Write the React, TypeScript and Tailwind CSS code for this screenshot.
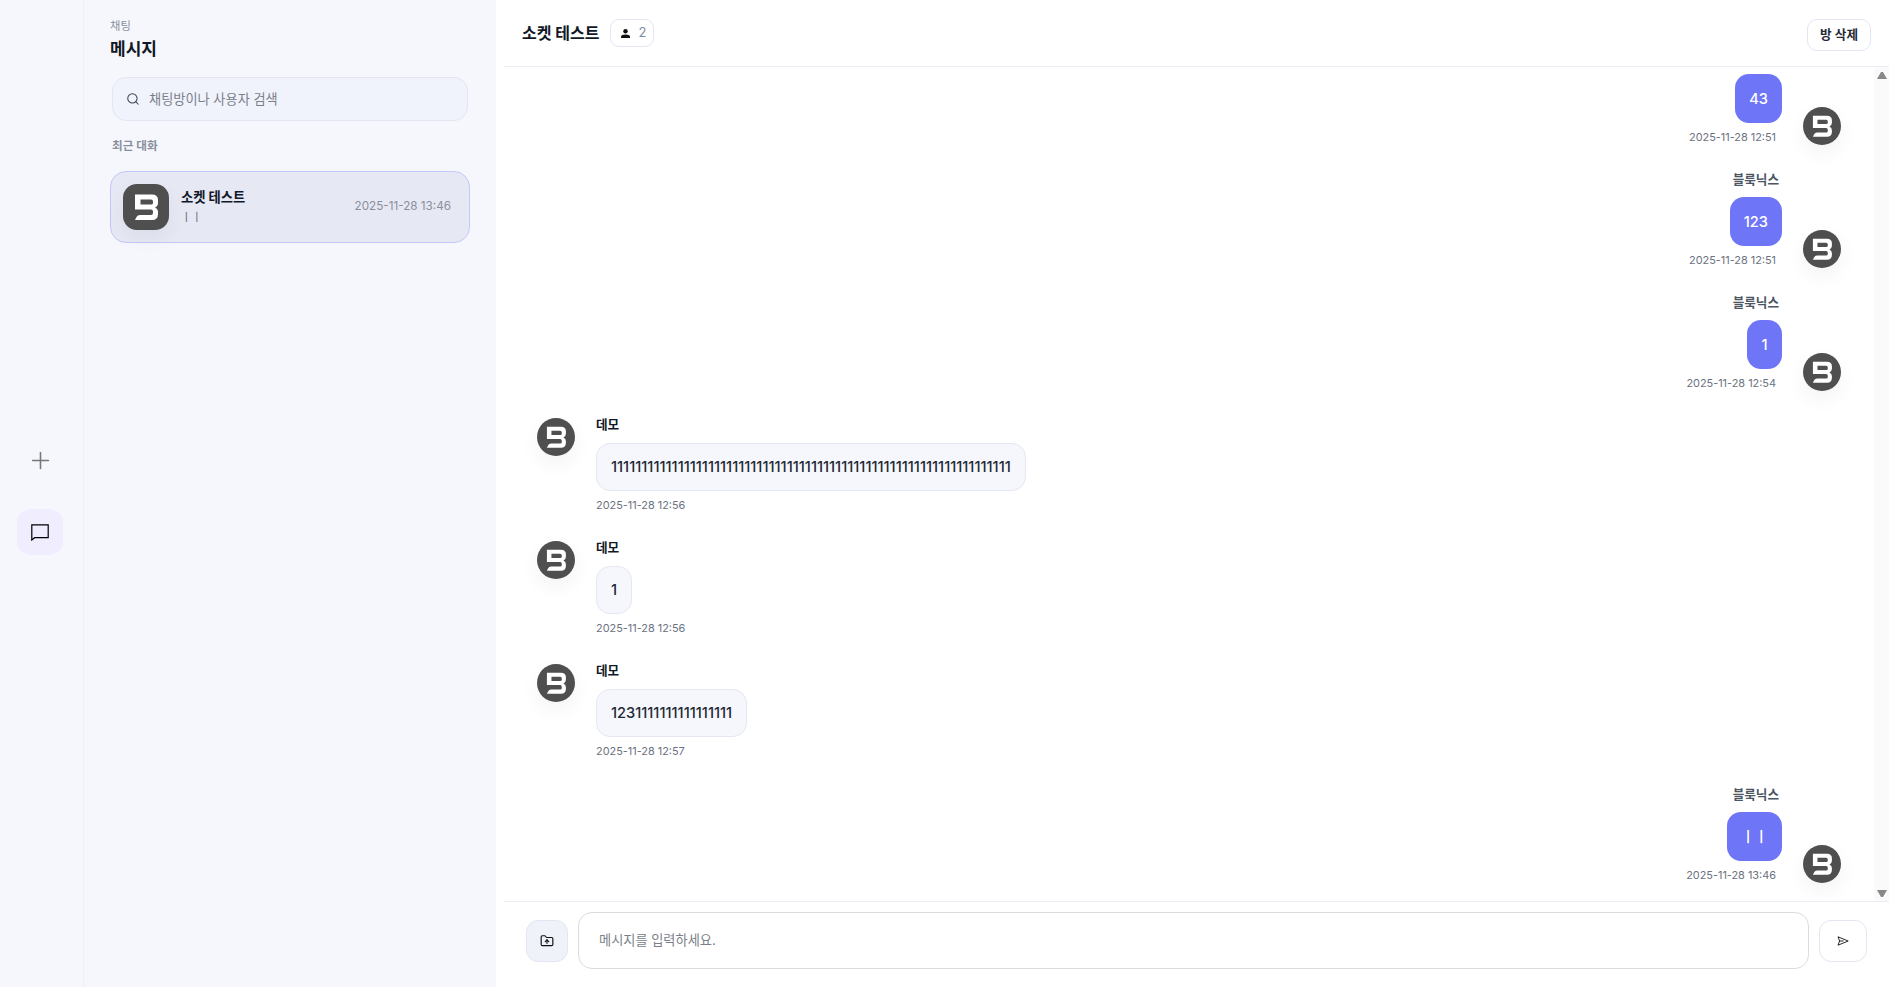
import { FolderUp, Plus, Search } from 'lucide-react';

const FONT = "font-['Inter','Noto_Sans_CJK_KR',sans-serif]";

type Message = { id: number; mine: boolean; name?: string; text: string; time: string };

const messages: Message[] = [
  { id: 1, mine: true, text: '43', time: '2025-11-28 12:51' },
  { id: 2, mine: true, name: '블룩닉스', text: '123', time: '2025-11-28 12:51' },
  { id: 3, mine: true, name: '블룩닉스', text: '1', time: '2025-11-28 12:54' },
  { id: 4, mine: false, name: '데모', text: '1'.repeat(66), time: '2025-11-28 12:56' },
  { id: 5, mine: false, name: '데모', text: '1', time: '2025-11-28 12:56' },
  { id: 6, mine: false, name: '데모', text: '1231111111111111111', time: '2025-11-28 12:57' },
  { id: 7, mine: true, name: '블룩닉스', text: 'ㅣㅣ', time: '2025-11-28 13:46' },
];

function Logo({ className }: { className: string }) {
  return (
    <div className={`flex shrink-0 items-center justify-center bg-[#4f4f4f] ${className}`}>
      <svg viewBox="0 0 46 46" className="h-full w-full">
        <path
          fillRule="evenodd"
          d="M12 10.5H29Q35 10.5 35 16V19Q35 22 32 23.5Q35 25 35 28V30Q35 36 29 36H12L13.5 33Q14.5 31 17 31H28Q30 31 30 29V27.5Q30 25.5 28 25.5H12ZM17.5 15.5V20.5H28Q30 20.5 30 19V17.5Q30 15.5 28 15.5Z"
          fill="#fff"
        />
      </svg>
    </div>
  );
}

function Bubble({ message }: { message: Message }) {
  if (message.mine) {
    return (
      <div className="flex items-end justify-end gap-[21px] pr-[33px]">
        <div className="flex flex-col items-end">
          {message.name && (
            <div className="mt-[1px] mr-[3px] mb-[7px] text-[12.6px] leading-[20px] font-semibold text-[#4b5563]">{message.name}</div>
          )}
          <div className="min-w-[35px] rounded-[14px] bg-[#6f75f7] px-[14px] pt-[15px] pb-[13px] text-center text-[14.6px] leading-[21px] font-medium text-white">
            {message.text}
          </div>
          <div className="mt-[5px] mr-[6px] text-[10.9px] leading-[18px] text-[#6b7280]">{message.time}</div>
        </div>
        <Logo className="mb-[1px] size-[38px] rounded-full shadow-[0_8px_20px_rgba(15,23,42,0.05)]" />
      </div>
    );
  }
  return (
    <div className="mb-[1px] flex items-start gap-[21px] pl-[33px]">
      <Logo className="mt-[3px] size-[38px] rounded-full shadow-[0_8px_20px_rgba(15,23,42,0.05)]" />
      <div className="flex flex-col items-start">
        <div className="mb-[8px] text-[12.6px] leading-[20px] font-semibold text-[#111827]">{message.name}</div>
        <div className="rounded-[14px] border border-[#e5e7f2] bg-[#f6f7fc] px-[14px] py-[13px] text-[14.6px] leading-[20px] font-medium text-[#1f2937]">
          {message.text}
        </div>
        <div className="mt-[5px] text-[10.9px] leading-[18px] text-[#6b7280]">{message.time}</div>
      </div>
    </div>
  );
}

export default function App() {
  return (
    <div className={`flex h-[987px] w-[1900px] overflow-hidden bg-white ${FONT}`}>
      {/* Icon rail */}
      <aside className="flex w-[84px] shrink-0 flex-col items-center border-r border-[#eff0f6] bg-[#f6f7fc] pt-[437px] pr-[3px]">
        <button className="flex size-[46px] items-center justify-center text-[#777]">
          <Plus size={27} strokeWidth={1.4} />
        </button>
        <button className="mt-[26px] flex size-[46px] items-center justify-center rounded-[14px] bg-[#f0eefe]">
          <svg width="18" height="17" viewBox="0 0 18 17" fill="none" stroke="#000" strokeWidth="1.2">
            <path d="M.8.8H17.2V13.7H3.6L.8 16Z" />
          </svg>
        </button>
      </aside>

      {/* Room list */}
      <aside className="w-[412px] shrink-0 bg-[#f6f7fc] px-[26px] pt-[17px]">
        <div className="text-[11.3px] leading-[18px] text-[#8a8f9c]">채팅</div>
        <h1 className="mt-[1px] text-[17px] leading-[26px] font-bold text-[#111827]">메시지</h1>
        <div className="mt-[15px] ml-[2px] flex h-[44px] w-[356px] items-center gap-[9px] rounded-[14px] border border-[#e3e6f2] bg-[#f0f3fc] pl-[13px]">
          <Search size={14} strokeWidth={1.75} className="text-[#374151]" />
          <span className="pt-[1px] text-[13.2px] text-[#7b7f8a]">채팅방이나 사용자 검색</span>
        </div>
        <div className="mt-[15px] ml-[2px] text-[11.6px] leading-[20px] font-semibold text-[#8a8f9c]">최근 대화</div>
        <div className="mt-[15px] flex h-[72px] w-[360px] items-center rounded-[16px] border border-[#c4c7fa] bg-[#e6e8f4] pr-[18px] pl-[12px]">
          <Logo className="size-[46px] rounded-[14px] shadow-[0_8px_20px_rgba(15,23,42,0.05)]" />
          <div className="ml-[12px] min-w-0 flex-1">
            <div className="mt-[-1px] text-[13.3px] leading-[20px] font-bold text-[#111827]">소켓 테스트</div>
            <div className="mt-[1px] text-[11.5px] leading-[18px] text-[#6b7280]">ㅣㅣ</div>
          </div>
          <div className="text-[11.7px] text-[#8a8f9c]">2025-11-28 13:46</div>
        </div>
      </aside>

      {/* Conversation */}
      <main className="ml-[8px] flex w-[1385px] shrink-0 flex-col bg-white">
        <header className="flex h-[67px] shrink-0 items-center border-b border-[#eceef6] pr-[18px] pl-[18px]">
          <h2 className="text-[16px] font-bold text-[#111827]">소켓 테스트</h2>
          <div className="ml-[11px] flex h-[28px] w-[44px] items-center gap-[8px] rounded-[9px] border border-[#e3e6f2] pl-[10px] text-[13px] text-[#7f8ba3]">
            <svg width="9" height="9" viewBox="0 0 9 9" fill="#111" className="shrink-0">
              <circle cx="4.5" cy="2.3" r="2.2" />
              <path d="M0 9V7.8C0 6.2 2 5.4 4.5 5.4S9 6.2 9 7.8V9Z" />
            </svg>
            <span>2</span>
          </div>
          <button className="mt-[4px] ml-auto h-[32px] w-[64px] rounded-[10px] border border-[#e3e6f2] text-[12.6px] font-semibold text-[#1f2937]">
            방 삭제
          </button>
        </header>

        <div className="flex min-h-0 flex-1">
          <div className="flex min-w-0 flex-1 flex-col gap-[23px] overflow-hidden pt-[7px]">
            {messages.map((message) => (
              <Bubble key={message.id} message={message} />
            ))}
          </div>
          {/* Scrollbar track */}
          <div className="flex w-[15px] shrink-0 flex-col items-center justify-between bg-[#fafafa] pt-[5px] pb-[4px]">
            <svg width="10" height="7" viewBox="0 0 10 7" fill="#888">
              <path d="M4 0H6L10 7H0Z" />
            </svg>
            <svg width="10" height="7" viewBox="0 0 10 7" fill="#888">
              <path d="M0 0H10L6 7H4Z" />
            </svg>
          </div>
        </div>

        <footer className="flex h-[86px] shrink-0 items-center gap-[10px] border-t border-[#eceef6] pr-[22px] pb-[8px] pl-[22px]">
          <button className="flex size-[42px] shrink-0 items-center justify-center rounded-[12px] border border-[#e3e6f2] bg-[#f0f2fa] text-[#111]">
            <FolderUp size={14} strokeWidth={2} />
          </button>
          <div className="flex h-[57px] flex-1 items-center rounded-[14px] border border-[#dcdcdc] bg-white pl-[20px] text-[13.2px] text-[#7b7f8a]">
            메시지를 입력하세요.
          </div>
          <button className="flex h-[42px] w-[48px] shrink-0 items-center justify-center rounded-[12px] border border-[#e3e6f2] bg-white">
            <svg width="12" height="10" viewBox="0 0 12 10" fill="none" stroke="#111" strokeWidth="0.9">
              <path d="M1 .8L11.2 5L1 9.2L2.6 5ZM2.6 5H6.5" />
            </svg>
          </button>
        </footer>
      </main>
    </div>
  );
}
